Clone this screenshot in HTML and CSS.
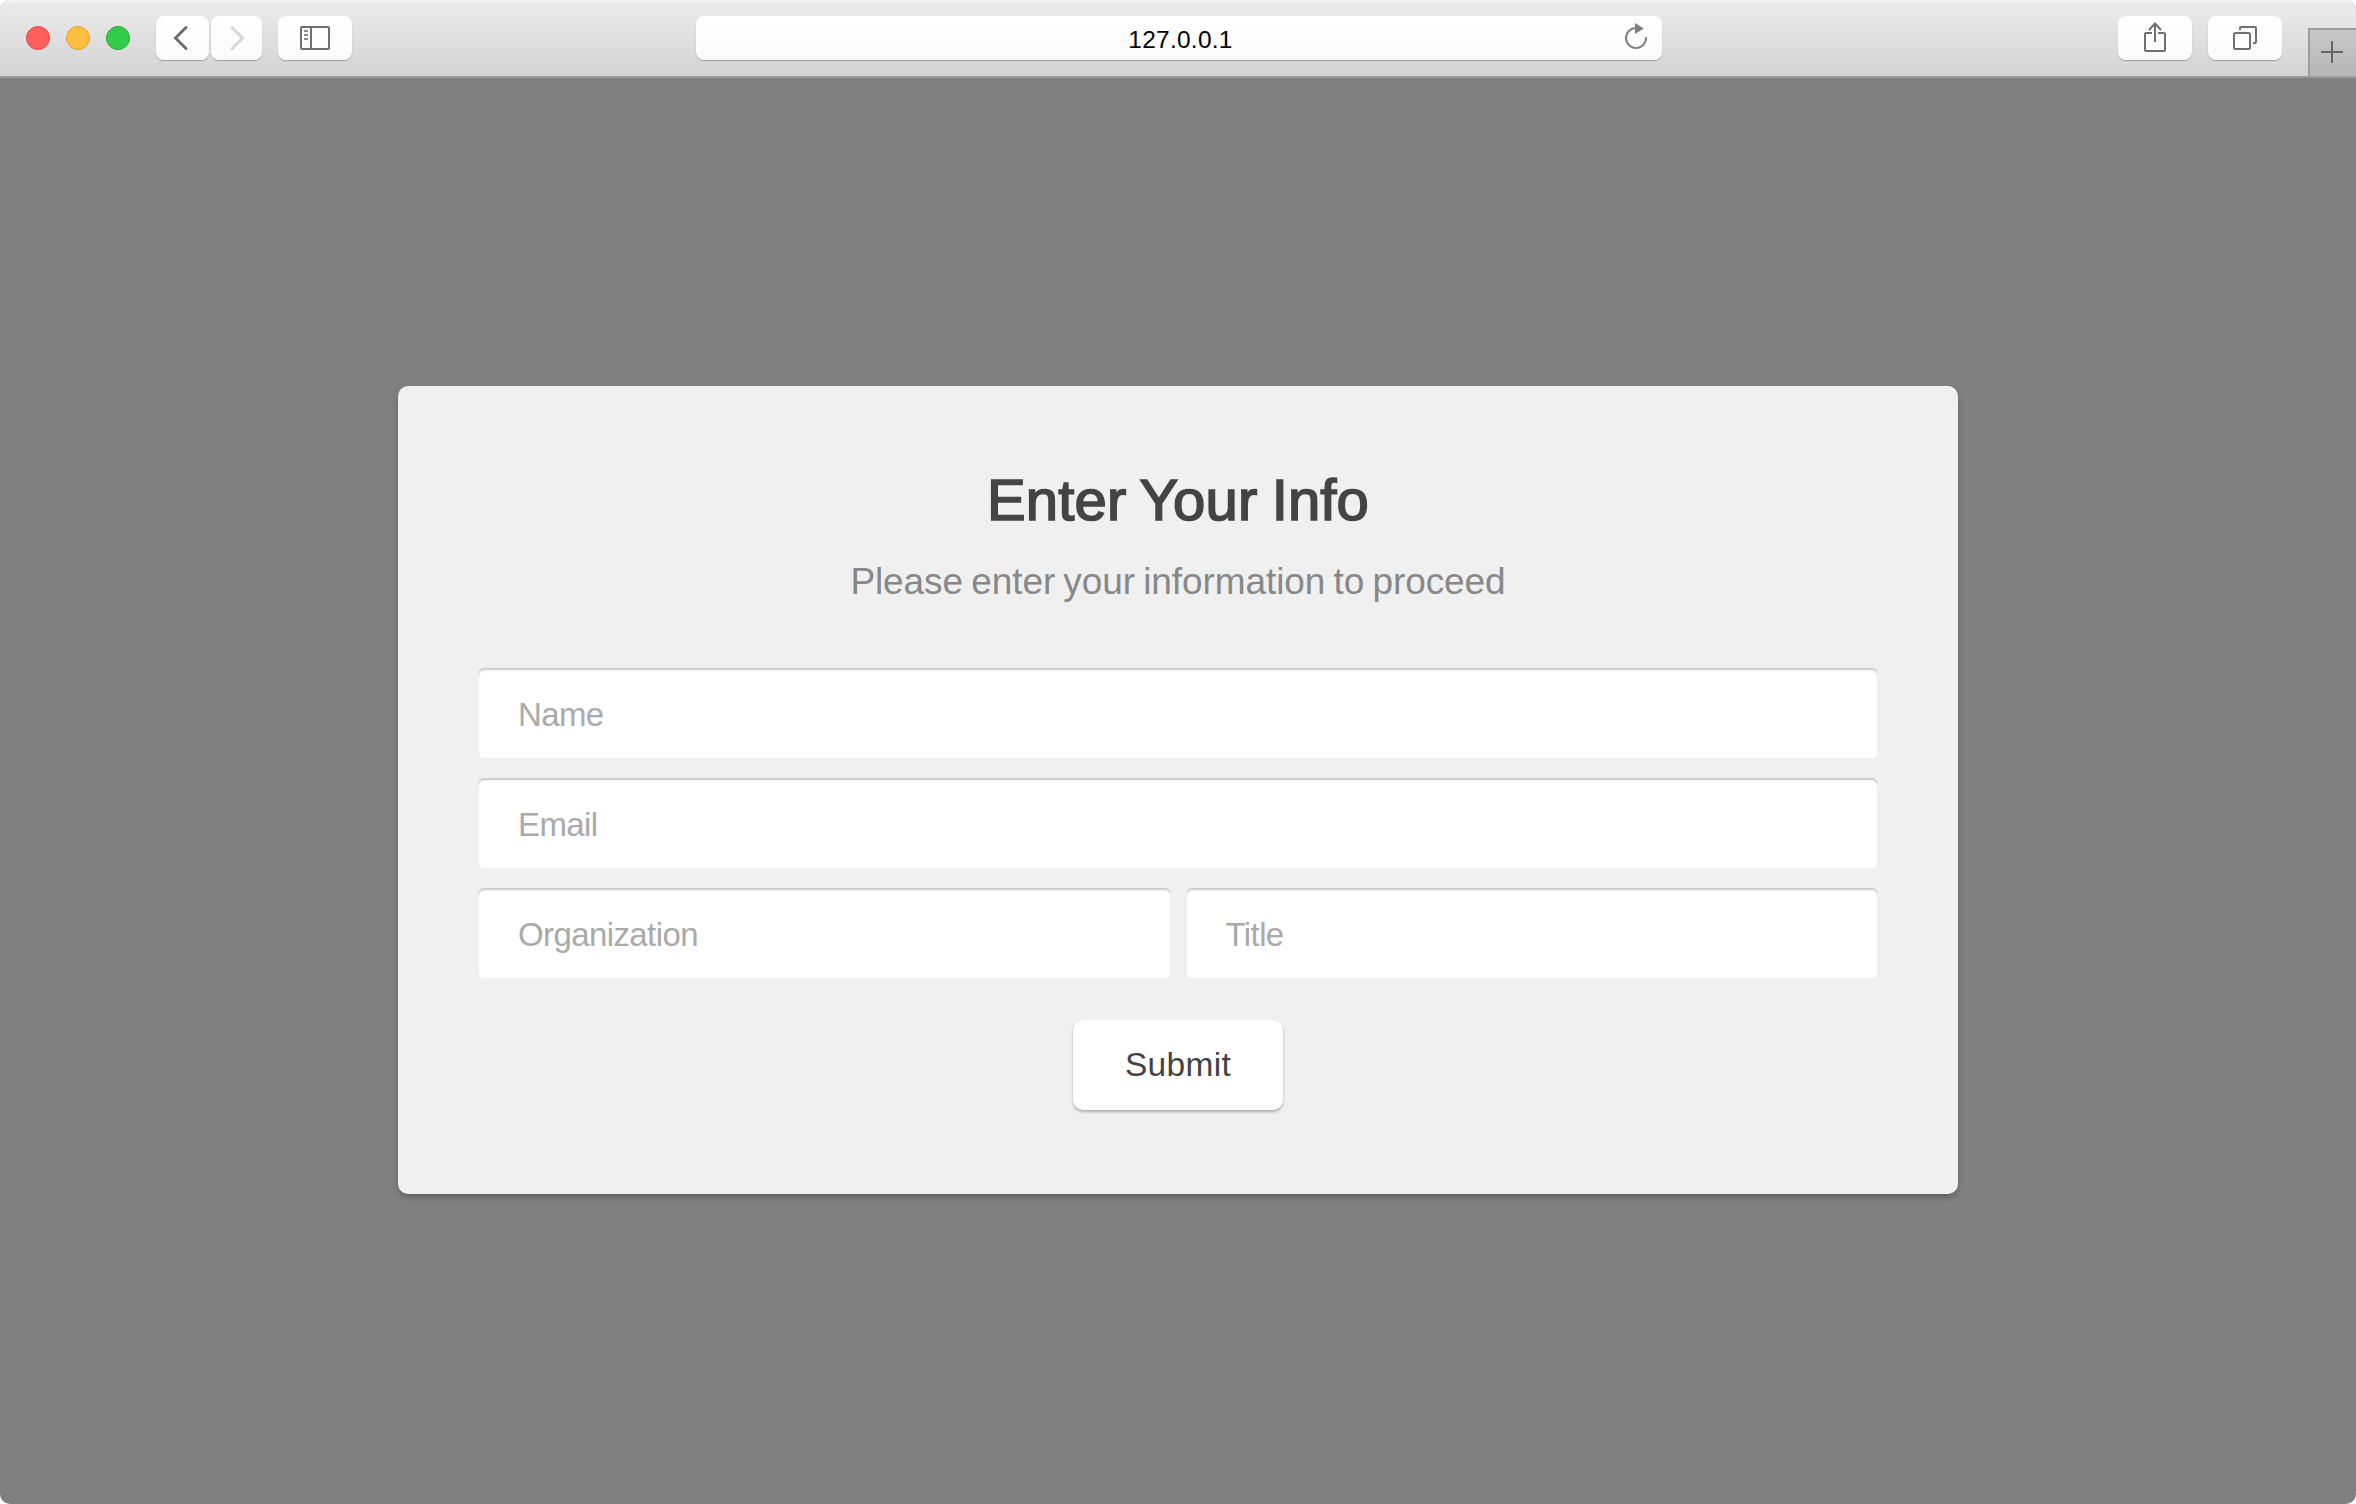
FILE: index.html
```html
<!DOCTYPE html>
<html lang="en">
<head>
<meta charset="utf-8">
<title>Enter Your Info</title>
<link rel="stylesheet" href="styles.css">
</head>
<body>
<div class="window">
  <header class="toolbar">
    <div class="lights">
      <span class="light light-close"></span>
      <span class="light light-min"></span>
      <span class="light light-max"></span>
    </div>
    <div class="nav">
      <button class="tool back" aria-label="Back"><svg width="53" height="44" viewBox="0 0 53 44"><path d="M30 11.500 19.500 22 30 32.500" stroke="#6f6f6f" stroke-width="3" stroke-linecap="round"/></svg></button>
      <button class="tool forward" aria-label="Forward"><svg width="51" height="44" viewBox="0 0 51 44"><path d="M21 11.500 31.500 22 21 32.500" stroke="#d8d8d8" stroke-width="3" stroke-linecap="round"/></svg></button>
    </div>
    <button class="tool wide" aria-label="Sidebar"><svg width="74" height="44" viewBox="0 0 74 44" stroke="#6f6f6f" stroke-width="2"><rect x="23" y="11" width="28" height="22" rx="1"/><path d="M33 11v22"/><path d="M26 15h4M26 19h4M26 23h4" stroke="#8c8c8c"/></svg></button>
    <div class="address">
      <span class="url">127.0.0.1</span>
      <svg class="reload" width="30" height="44" viewBox="0 0 30 44"><path d="M25 21.200A10 10 0 1 1 14 12.050" stroke="#808080" stroke-width="2"/><path d="M14 7v11l9-5.500z" fill="#808080"/></svg>
    </div>
    <div class="actions">
      <button class="tool wide" aria-label="Share"><svg width="74" height="44" viewBox="0 0 74 44" stroke="#6f6f6f" stroke-width="2"><path d="M34 17h-6a1 1 0 0 0-1 1v16a1 1 0 0 0 1 1h18a1 1 0 0 0 1-1V18a1 1 0 0 0-1-1h-6M37 26V8M31 14l6-6.500 6 6.500"/></svg></button>
      <button class="tool wide" aria-label="Tabs"><svg width="74" height="44" viewBox="0 0 74 44" stroke="#6f6f6f" stroke-width="2"><rect x="26" y="17" width="16" height="16" rx="1.500"/><path d="M32 14v-2a1 1 0 0 1 1-1h14a1 1 0 0 1 1 1v14a1 1 0 0 1-1 1h-2"/></svg></button>
    </div>
    <button class="new-tab" aria-label="New tab"><svg width="22" height="22" viewBox="0 0 22 22"><path d="M11 0v22M0 11h22" stroke="#666" stroke-width="2"/></svg></button>
  </header>
  <main class="page">
    <form class="card">
      <h1 class="title">Enter Your Info</h1>
      <p class="subtitle">Please enter your information to proceed</p>
      <div class="fields">
        <input class="field full" placeholder="Name" aria-label="Name">
        <input class="field full" placeholder="Email" aria-label="Email">
        <input class="field" placeholder="Organization" aria-label="Organization">
        <input class="field" placeholder="Title" aria-label="Title">
      </div>
      <button class="submit" type="button">Submit</button>
    </form>
  </main>
</div>
</body>
</html>
```
FILE: styles.css
```css
* { box-sizing: border-box; }

body {
  margin: 0;
  background: #fff;
  font-family: "Liberation Sans", Arial, sans-serif;
}

button, input { margin: 0; border: 0; font-family: inherit; }
svg { display: block; fill: none; }

.window {
  display: flex;
  flex-direction: column;
  width: 2356px;
  height: 1504px;
  overflow: hidden;
  border-radius: 10px;
  background: #808080;
}

.toolbar {
  display: flex;
  align-items: flex-start;
  height: 78px;
  padding: 16px 0 0 26px;
  border-bottom: 2px solid #9d9d9d;
  background: linear-gradient(#ececec, #d3d3d3);
  box-shadow: inset 0 2px 0 #f5f5f5;
}

.lights { display: flex; gap: 16px; padding-top: 10px; }
.light { width: 24px; height: 24px; border: 1px solid; border-radius: 50%; }
.light-close { background: #fe5f5a; border-color: #e24a45; }
.light-min { background: #febe40; border-color: #dfa035; }
.light-max { background: #33cb4a; border-color: #24ab35; }

.nav { display: flex; gap: 2px; margin: 0 16px 0 26px; }

.tool, .address {
  height: 44px;
  padding: 0;
  border-radius: 8px;
  background: linear-gradient(#fff, #fbfbfb);
  box-shadow: 0 1px 1px rgba(0, 0, 0, .28);
}

.back { width: 53px; }
.forward { width: 51px; }
.wide { width: 74px; }

.address {
  display: grid;
  grid-template-columns: 41px 1fr 41px;
  width: 966px;
  margin: 0 456px 0 344px;
}

.url {
  grid-column: 2;
  padding-left: 3px;
  color: #000;
  font-size: 24.500px;
  letter-spacing: .25px;
  line-height: 47px;
  text-align: center;
}

.actions { display: flex; gap: 16px; }

.new-tab {
  display: flex;
  align-items: center;
  justify-content: center;
  width: 48px;
  height: 48px;
  margin: 12px 0 0 26px;
  padding: 0 2px 2px 0;
  border: solid #9d9d9d;
  border-width: 2px 0 0 2px;
  background: linear-gradient(#c8c8c8, #b6b6b6);
}

.page {
  display: flex;
  flex: 1;
  align-items: center;
  justify-content: center;
}

.card {
  display: flex;
  flex-direction: column;
  align-items: center;
  width: 1560px;
  height: 808px;
  margin-bottom: 2px;
  padding: 80px;
  border-radius: 10px;
  background: #f0f0f0;
  box-shadow: 0 4px 8px -3px rgba(0, 0, 0, .45);
}

.title {
  margin: 0;
  color: #444;
  font-size: 58px;
  font-weight: 400;
  letter-spacing: .15px;
  line-height: 68px;
  word-spacing: -2px;
  -webkit-text-stroke: 1.700px #444;
}

.subtitle {
  margin: 18px 0 0;
  color: #888;
  font-size: 37px;
  letter-spacing: -.08px;
  line-height: 60px;
  word-spacing: -2px;
}

.fields {
  display: grid;
  grid-template-columns: 1fr 1fr;
  gap: 20px 15px;
  width: 1400px;
  margin-top: 56px;
}

.field {
  width: 100%;
  height: 90px;
  padding: 4px 40px 0;
  border-radius: 6px;
  background: #fff;
  box-shadow: inset 0 2px 2px rgba(0, 0, 0, .22);
  font-size: 33px;
  letter-spacing: -.6px;
}

.full { grid-column: 1 / -1; }
.field::placeholder { color: #aaa; opacity: 1; }

.submit {
  width: 210px;
  height: 90px;
  margin-top: 42px;
  padding: 0;
  border-radius: 10px;
  background: #fff;
  box-shadow: 0 2px 3px rgba(0, 0, 0, .28);
  color: #444;
  font-size: 33.500px;
  letter-spacing: .3px;
}
```
